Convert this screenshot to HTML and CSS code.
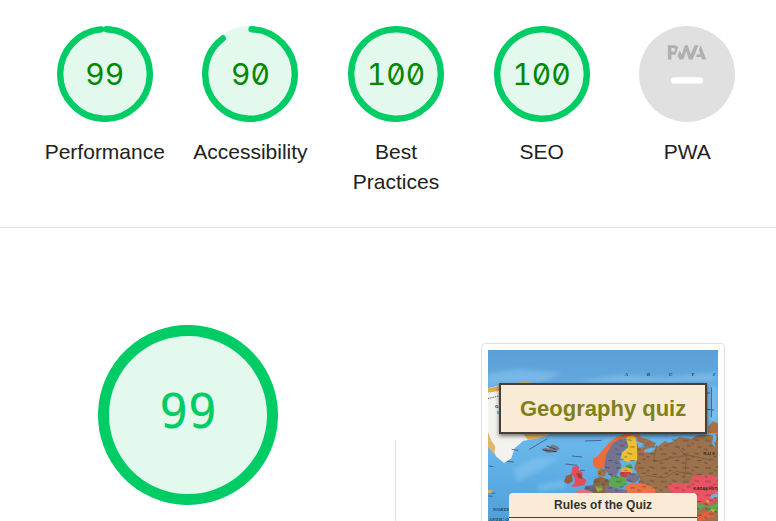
FILE: index.html
```html
<!DOCTYPE html>
<html lang="en">
<head>
<meta charset="utf-8">
<title>Lighthouse report</title>
<link rel="stylesheet" href="styles.css">
</head>
<body>
<nav class="scores" aria-label="Scores">
  <a class="score" href="#performance">
    <span class="gauge">
      <svg class="ring" viewBox="0 0 120 120" aria-hidden="true"><circle class="ring-base" cx="60" cy="60" r="56"/><circle class="ring-arc" cx="60" cy="60" r="56" stroke-dasharray="344.3 352"/></svg>
      <span class="value">99</span>
    </span>
    <span class="label">Performance</span>
  </a>
  <a class="score" href="#accessibility">
    <span class="gauge">
      <svg class="ring" viewBox="0 0 120 120" aria-hidden="true"><circle class="ring-base" cx="60" cy="60" r="56"/><circle class="ring-arc" cx="60" cy="60" r="56" stroke-dasharray="312.7 352"/></svg>
      <span class="value">90</span>
    </span>
    <span class="label">Accessibility</span>
  </a>
  <a class="score" href="#best-practices">
    <span class="gauge">
      <svg class="ring" viewBox="0 0 120 120" aria-hidden="true"><circle class="ring-base" cx="60" cy="60" r="56"/><circle class="ring-arc" cx="60" cy="60" r="56"/></svg>
      <span class="value">100</span>
    </span>
    <span class="label">Best Practices</span>
  </a>
  <a class="score" href="#seo">
    <span class="gauge">
      <svg class="ring" viewBox="0 0 120 120" aria-hidden="true"><circle class="ring-base" cx="60" cy="60" r="56"/><circle class="ring-arc" cx="60" cy="60" r="56"/></svg>
      <span class="value">100</span>
    </span>
    <span class="label">SEO</span>
  </a>
  <a class="score" href="#pwa">
    <span class="gauge">
      <svg class="ring" viewBox="0 0 60 60" aria-hidden="true">
        <circle cx="30" cy="30" r="30" fill="#e0e0e0"/>
        <g fill="#b0b0b0">
          <path d="M35.66 19.39l.7-1.75h2L37.4 15 38.6 12l3.4 9h-2.51l-.58-1.61z"/>
          <path d="M33.52 21l3.65-9h-2.42l-2.5 5.82L30.5 12h-1.86l-1.9 5.82-1.35-2.65-1.21 3.72L25.4 21h2.38l1.72-5.2 1.64 5.2z"/>
          <path fill-rule="evenodd" d="M20.3 17.91h1.48c.45 0 .85-.05 1.2-.15l.39-1.18 1.07-3.3a2.64 2.64 0 0 0-.28-.37c-.55-.6-1.36-.91-2.42-.91H18v9h2.3V17.9zm1.96-3.84c.22.22.33.5.33.87 0 .36-.1.65-.29.87-.2.23-.59.35-1.15.35h-.86v-2.41h.87c.52 0 .89.1 1.1.32z"/>
        </g>
        <rect x="20" y="32" width="20" height="4" rx="2" fill="#fff"/>
      </svg>
    </span>
    <span class="label">PWA</span>
  </a>
</nav>
<main class="category" id="performance">
  <section class="summary">
    <div class="gauge gauge-large">
      <svg class="ring" viewBox="0 0 180 180" aria-hidden="true"><circle class="ring-base" cx="90" cy="90" r="84"/><circle class="ring-arc" cx="90" cy="90" r="84.5"/></svg>
      <span class="value">99</span>
    </div>
  </section>
  <div class="divider"></div>
  <section class="preview">
    <figure class="shot">
      <svg class="map" viewBox="24 24 690 639" preserveAspectRatio="xMidYMin slice" aria-hidden="true">
        <defs>
          <linearGradient id="sea" x1="0" y1="0" x2="0" y2="1"><stop offset="0" stop-color="#5a9fd6"/><stop offset=".16" stop-color="#62a9de"/><stop offset=".45" stop-color="#69b6ea"/><stop offset=".65" stop-color="#58a9e2"/><stop offset="1" stop-color="#4b93ca"/></linearGradient>
          <pattern id="names" width="67" height="41" patternUnits="userSpaceOnUse"><path d="M6 9h17M40 5l14 4M17 24h12M49 28h13M3 34l10 3M31 17h8" stroke="#3d3027" stroke-width="3" opacity=".55"/></pattern>
          <filter id="soft" x="-20%" y="-20%" width="140%" height="140%"><feGaussianBlur stdDeviation="6"/></filter>
        </defs>
        <rect x="24" y="24" width="690" height="639" fill="url(#sea)"/>
        <g fill="#8cc9f2" opacity=".5" filter="url(#soft)">
          <path d="M24 95l90-14 130 12-60 30-160 10z"/><path d="M260 122l170-24 120 10 160-18v26l-180 8z"/><path d="M100 380l60-30 80-5-60 40-70 35z"/><path d="M170 430l80-15 10 20-80 12z"/><path d="M682 130h32v110h-32z"/>
        </g>
        <path d="M24 138l38-8v145h145l-30 12-48 10-25 22-10 30-22 14-24-20-14-32-10-30z" fill="#f3f2ef"/>
        <path d="M24 138l36-6v14l-36 6zM100 124l40-4 25 4z" fill="#e0ad4e"/>
        <path d="M24 270l10 26 12 18-4 22-18-20zM130 276l60 0 20 2-36 12-30 4z" fill="#e3b566"/>
        <path d="M24 170l36-9" stroke="#555" stroke-width="3" stroke-dasharray="4 3"/>
        <path d="M95 322l20 3M80 358l22 2M26 372l14 2M148 322l54-32M315 297l50-2M276 342l30 3M256 366l36 4M300 385l14 0M24 452l22 2M24 462l14 1" stroke="#33526f" stroke-width="3" opacity=".75"/>
        <path d="M184 321l14-4 8 4 10-14 16 6 8 8-16 10-22 2z" fill="#777b90"/><path d="M188 324l42 5M200 312l28 10" stroke="#3e4155" stroke-width="3"/>
        <path d="M338 350l16-8 14-18 18-20 22-18 28-10 40 2 10 8-34-2-24 6-28 22-12 38-12 26-22 6-14-10z" fill="#ee6c3a"/>
        <path d="M372 380l6-40 20-36 22-14 22 0 4 24-20 16-8 26 6 14-14 30-14 8-10-12z" fill="#747391"/>
        <path d="M440 284l22-4 8 22 6 22-4 30-30 6-18-8 2-20 20-16-6-18z" fill="#ecbf34"/>
        <path d="M470 284l30 6 28 14-8 12-24 6-6 8 24 2 16-16 24-18 16 6 28-18 34 4 20-10 60-4 4-32 18-4v433H470l20-200-20-25 10-40-18-30 10-26z" fill="#9c714d"/>
        <path d="M470 296l22 10 4 8-20 4zM548 278l10 20 8-4-6-18zM624 276l22 6-14 10zM682 272l18 10-4 24 8 8 6-28-8-16-20-20z" fill="#67b1e6"/>
        <path d="M678 153l12 0M678 202l24 2M694 136v90" stroke="#356388" stroke-width="3"/>
        <path d="M684 254l14-16 16 6v30h-30z" fill="#a97148"/>
        <path d="M436 370l18-4 4 12-18 4z" fill="#52a344"/><path d="M424 378l22-2 14 10-8 8-30-4z" fill="#ddb035"/><path d="M422 390l30 0 2 10-20 8-14-6z" fill="#d53d42"/>
        <path d="M442 396l28-2 8 18-16 12-26-8z" fill="#77738e"/>
        <path d="M386 410l20-8 28 4 6 16-14 16-28-2-14-12z" fill="#5da74e"/>
        <path d="M434 434l22-12 36 4 32 12 4 20h-88z" fill="#ec7145"/>
        <path d="M352 388l12-10 16 10-4 14-20 2z" fill="#a37546"/>
        <path d="M342 412l20-8 22 8 4 20 26 8v25h-80l4-30z" fill="#8a6546"/><path d="M316 432l22-2 14 10-16 10-26-2z" fill="#69657c"/><path d="M346 434l18-4 4 14-16 6z" fill="#8fae3c"/><path d="M376 430l34 8 30 6 4 14h-66z" fill="#77738e"/>
        <path d="M278 374l18-2 0 12 12 8-2 14 14 10-8 14-24 4-14 0 10-12 0-14-10-12z" fill="#e44c58"/><path d="M288 392l16 4 4 14-12-2z" fill="#9b4038"/>
        <path d="M258 402l18-6 2 22-14 8-12-6z" fill="#935c3e"/>
        <path d="M286 448l26-6 26 8v12h-60z" fill="#df707d"/>
        <path d="M560 432l18-10 36 4 18-4 6-18 36-6 40 8v58l-20 26-36-4-18-32-50 4-18-10z" fill="#ea5364"/>
        <path d="M648 490l20-8 46 12v169h-66z" fill="#9c714d"/><path d="M650 482l30 10-24 12zM680 494l34-10v22l-28 4z" fill="#5da74e"/><path d="M652 520l32-12 24 14-50 16z" fill="#e85e3b"/><path d="M690 500l16 4-6 8zM676 474l12 2-4 8z" fill="#e1b035"/>
        <path d="M690 462l24-12v14l-20 6z" fill="#70b3dd"/>
        <path d="M24 444l14 0-4 10-10 0z" fill="#c9b372"/>
        <path d="M470 296l60 10 60-20 124 0v250H520l-40-80H300l80-90 20-40 30-40z" fill="url(#names)"/>
        <path d="M520 360l60-14 50-6 60 14M500 400l50 8 40-20 50 10M590 310l30 34-6 60M530 310l-10 50" fill="none" stroke="#795637" stroke-width="2"/>
        <g class="map-names"><text x="434" y="101">A</text><text x="500" y="101">B</text><text x="567" y="101">C</text><text x="634" y="101">T</text><text x="699" y="101">I</text><text x="38" y="508">NORTH</text><text x="26" y="536">ANTIC O</text></g>
        <g class="map-places"><text x="45" y="197">G</text><text x="52" y="216">I</text><text x="670" y="338">R U S</text><text x="640" y="445">KAZAKHSTAN</text></g>
      </svg>
      <h1 class="quiz-title">Geography quiz</h1>
      <div class="rules"><h2 class="rules-title">Rules of the Quiz</h2><div class="rules-body"></div></div>
    </figure>
  </section>
</main>
</body>
</html>
```
FILE: styles.css
```css
* { box-sizing: border-box; }
html { height: 100%; overflow: hidden; }
body {
  margin: 0;
  height: 100%;
  overflow: auto;
  scrollbar-width: none;
  background: #fff;
  color: #212121;
  font-family: "Liberation Sans", Arial, sans-serif;
}
.scores {
  display: grid;
  grid-template-columns: repeat(5, 1fr);
  padding: 26px 16px 30px 32px;
  border-bottom: 1px solid #e0e0e0;
}
.score {
  display: flex;
  flex-direction: column;
  align-items: center;
  gap: 15px;
  padding: 0 12px;
  color: inherit;
  text-decoration: none;
}
.gauge {
  display: grid;
  place-items: center;
  width: 96px;
  height: 96px;
}
.gauge > * { grid-area: 1 / 1; }
.ring { display: block; width: 100%; height: 100%; }
.ring-base { fill: #e3f9ed; stroke: #e3f9ed; stroke-width: 8; }
.ring-arc {
  fill: none;
  stroke: #00cc66;
  stroke-width: 8;
  stroke-linecap: round;
  transform: rotate(-88deg);
  transform-origin: 50% 50%;
}
.value {
  color: #080;
  font-family: Inter, sans-serif;
  font-feature-settings: "zero", "tnum", "ss02";
  font-size: 30px;
  line-height: 40px;
}
.label {
  font-size: 21px;
  line-height: 30px;
  text-align: center;
}
.category {
  display: grid;
  grid-template-columns: 51fr 1px 49fr;
  padding-top: 97px;
}
.summary { padding-right: 19px; }
.divider { margin-top: 115px; background: #e0e0e0; }
.gauge-large { width: 180px; height: 180px; margin: 0 auto; }
.gauge-large .ring-arc { stroke-width: 11; }
.gauge-large .value {
  padding-bottom: 8px;
  color: #00cc66;
  font-family: "DejaVu Sans Mono", monospace;
  font-size: 48px;
}
.preview {
  display: flex;
  justify-content: center;
  padding: 18px 0 0 34px;
}
.shot {
  position: relative;
  width: 244px;
  margin: 0;
  padding: 39px 17px 24px;
  border: 1px solid #e0e0e0;
  border-radius: 4px;
}
.map {
  position: absolute;
  inset: 6px;
  width: calc(100% - 12px);
  height: calc(100% - 12px);
}
.map-names { fill: #203a54; font: italic bold 15px "Liberation Serif", serif; }
.map-places { fill: #3a2a20; font: bold 13px "Liberation Sans", sans-serif; }
.quiz-title {
  position: relative;
  margin: 0;
  border: 2px solid #484038;
  background: #faebd7;
  color: #808019;
  font-size: 22px;
  line-height: 47px;
  text-align: center;
  box-shadow: 0 2px 4px #0008;
}
.rules {
  position: relative;
  margin: 59px 10px 0;
  border-radius: 4px;
  background: #faebd7;
  color: #333;
}
.rules-title {
  margin: 0;
  border-bottom: 1px solid #484038;
  font-size: 12px;
  line-height: 24px;
  text-align: center;
}
.rules-body { height: 24px; }
```
